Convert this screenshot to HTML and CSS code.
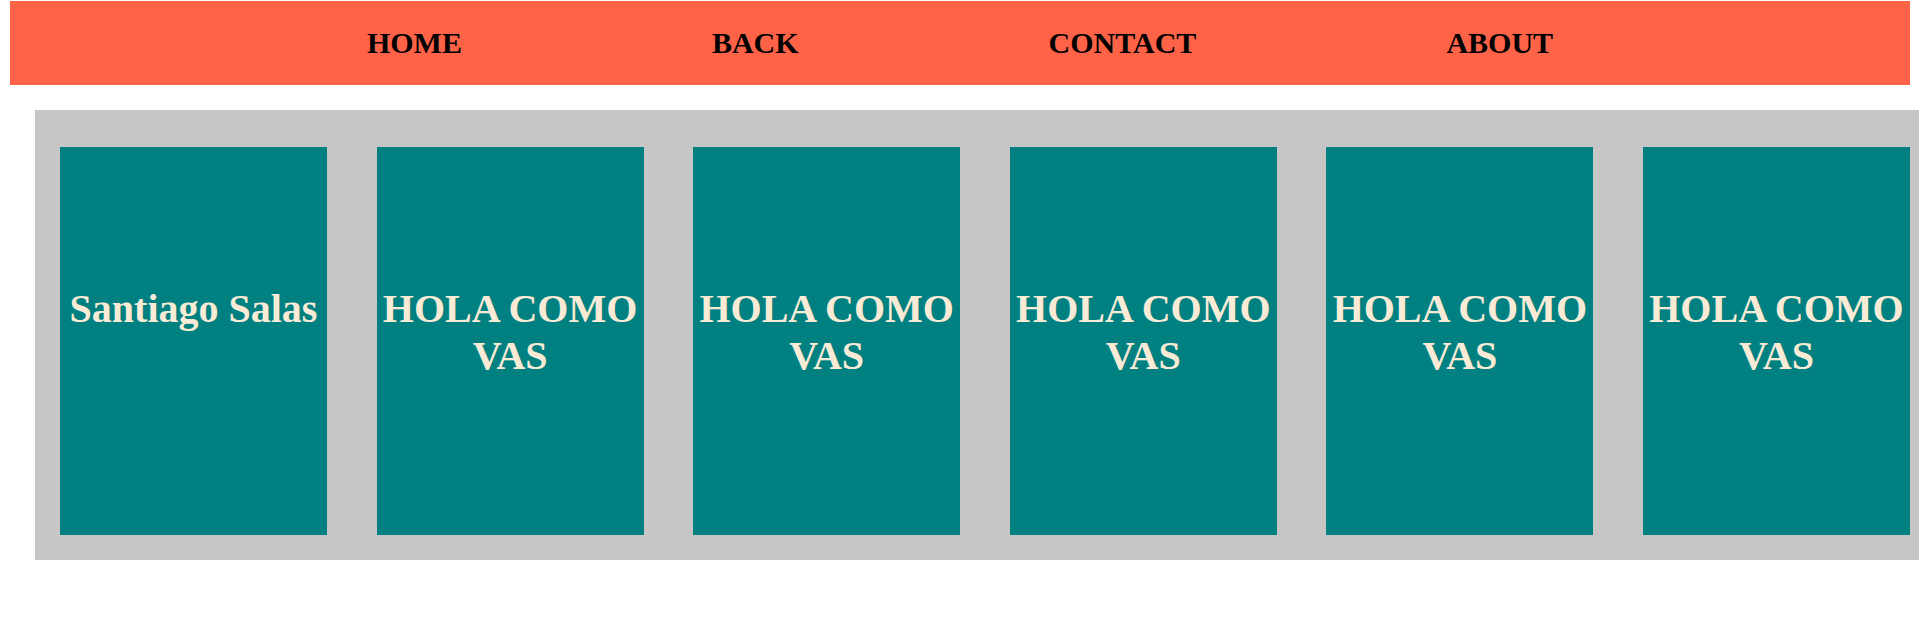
FILE: index.html
```html
<!DOCTYPE html>
<html lang="en">
<head>
    <meta charset="UTF-8">
    <meta name="viewport" content="width=device-width, initial-scale=1.0">
    <title>Galeria</title>
    <link rel="stylesheet" href="styles.css">
</head>
<body>
    <nav class="menu">
        <a href="#">HOME</a>
        <a href="#">BACK</a>
        <a href="#">CONTACT</a>
        <a href="#">ABOUT</a>
    </nav>
    <section class="galeria">
        <div class="tarjeta"><h2>Santiago Salas</h2></div>
        <div class="tarjeta"><h2>HOLA COMO VAS</h2></div>
        <div class="tarjeta"><h2>HOLA COMO VAS</h2></div>
        <div class="tarjeta"><h2>HOLA COMO VAS</h2></div>
        <div class="tarjeta"><h2>HOLA COMO VAS</h2></div>
        <div class="tarjeta"><h2>HOLA COMO VAS</h2></div>
    </section>
</body>
</html>
```

FILE: styles.css
```css
body {
    margin: 0;
    font-family: "Liberation Serif", "Times New Roman", serif;
    background: #fff;
    overflow-x: hidden;
}

.menu {
    background-color: tomato;
    margin: 1px 9px 0 10px;
    height: 84px;
    display: flex;
    justify-content: center;
    align-items: center;
    gap: 250px;
}

.menu a {
    color: #000;
    text-decoration: none;
    font-weight: bold;
    font-size: 30px;
}

.galeria {
    background-color: #c6c6c6;
    margin: 25px 0 0 35px;
    width: 1900px;
    box-sizing: border-box;
    padding: 37px 25px 25px 25px;
    display: flex;
    justify-content: space-between;
}

.tarjeta {
    background-color: teal;
    width: 267px;
    height: 388px;
    flex-shrink: 0;
    box-sizing: border-box;
    padding-top: 138px;
    text-align: center;
}

.tarjeta h2 {
    margin: 0;
    color: antiquewhite;
    font-size: 40px;
    font-weight: bold;
}
```
